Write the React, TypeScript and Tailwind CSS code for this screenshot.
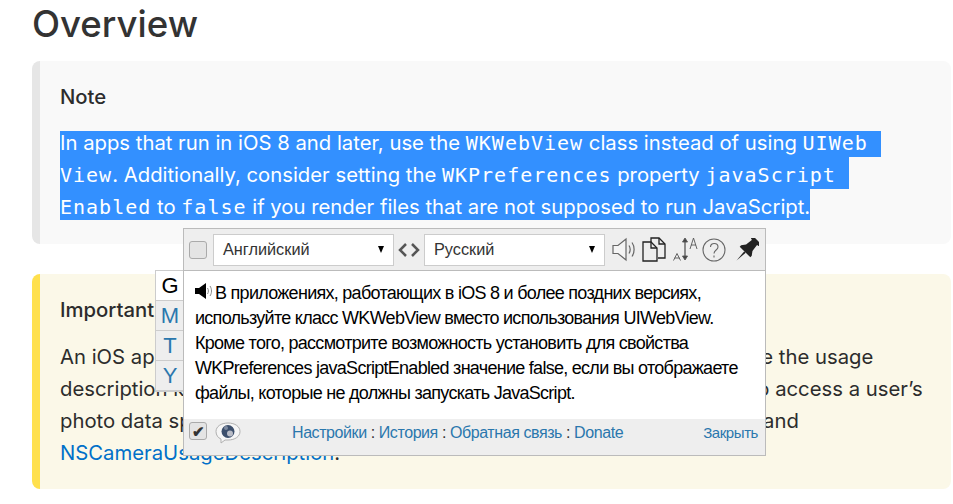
const mono = "font-['DejaVu_Sans_Mono',monospace] text-[20px] tracking-[1px]";

function Code({ children }: { children: React.ReactNode }) {
  return <span className={mono}>{children}</span>;
}

function SpeakerIcon() {
  return (
    <svg width="25" height="25" viewBox="0 0 25 25" fill="none" stroke="#666" strokeWidth="1.200">
      <path d="M1 8.500h5L14 2v21l-8-6.500H1z" fill="#f4f4f4" />
      <path d="M17 8.500c1.500 2.500 1.500 5.500 0 8M20 5.500c2.800 4 2.800 10 0 14" />
    </svg>
  );
}

function CopyIcon() {
  return (
    <svg width="25" height="25" viewBox="0 0 25 25" fill="none" stroke="#222" strokeWidth="1.300">
      <path d="M9 5V1h8l6 6v14h-7" />
      <path d="M17 1v6h6" />
      <path d="M1 5h8l6 6v13H1z" fill="#eee" />
      <path d="M9 5v6h6" />
    </svg>
  );
}

function FontSizeIcon() {
  return (
    <svg width="26" height="25" viewBox="0 0 26 25" fill="none" stroke="#555" strokeWidth="0.900">
      <path d="M0.500 23.500l3.500-7 3.500 7M1.500 21h5" />
      <path d="M12 4v16" strokeWidth="1.300" />
      <path d="M9.500 5L12 1l2.500 4zM9.500 19l2.500 4 2.500-4z" fill="#444" />
      <path d="M17 12l3.500-11 3.500 11M18 8h5" />
    </svg>
  );
}

function HelpIcon() {
  return (
    <svg width="24" height="24" viewBox="0 0 24 24" fill="none" stroke="#666" strokeWidth="1.100">
      <circle cx="12" cy="12" r="11" />
      <path d="M8.500 9c0-5 7.500-4.500 7.500 0 0 3-4 3-4 6.500" />
      <path d="M12 17.500v2" />
    </svg>
  );
}

function PinIcon() {
  return (
    <svg width="23" height="23" viewBox="0 0 23 23" fill="#222">
      <g transform="rotate(45 11.500 11.500)">
        <rect x="6" y="-2" width="11" height="3.500" rx="1" />
        <path d="M8 1h7l1 8 3 4v2H4v-2l3-4z" />
        <path d="M10.500 15h2L11.500 27z" />
      </g>
    </svg>
  );
}

function SmallSpeaker() {
  return (
    <svg width="18" height="18" viewBox="0 0 18 18" className="shrink-0 mb-[5px]" fill="none">
      <path d="M0 6h4l7-5v16l-7-5H0z" fill="#000" />
      <path d="M12.500 6c1.200 2 1.200 4 0 6M15 4c2 3 2 7 0 10" stroke="#888" strokeWidth="1" />
    </svg>
  );
}

function BubbleIcon() {
  return (
    <svg width="26" height="22" viewBox="0 0 26 22">
      <path d="M13 1c7 0 12 3.500 12 8.500S20 18 13 18c-1 0-2 0-3 0l-4 3 0-4C3 16 1 13 1 9.500 1 4.500 6 1 13 1z" fill="#f6f6f6" stroke="#b0b0b0" />
      <circle cx="13" cy="9.500" r="6.500" fill="#3c4f6c" />
      <circle cx="15" cy="11.500" r="3" fill="#b9bcc6" />
      <circle cx="11" cy="6" r="2" fill="#7d8aa0" />
    </svg>
  );
}

function LangSelect({ label }: { label: string }) {
  return (
    <div className="w-[181px] h-[32px] bg-white border border-[#ccc] flex items-center justify-between pl-[9px] pr-[9px] text-[16.300px] text-[#333]">
      <span>{label}</span>
      <span className="w-0 h-0 border-x-[3.500px] border-x-transparent border-t-[7px] border-t-black" />
    </div>
  );
}

function Tab({ letter, active }: { letter: string; active?: boolean }) {
  return (
    <div className={`h-[30px] pb-[1px] flex items-center justify-center text-[22px] border-b border-[#ccc] ${active ? "bg-white text-black" : "bg-[#eee] text-[#2a77ad]"}`}>
      {letter}
    </div>
  );
}

function Popup() {
  return (
    <>
      <div className="absolute left-[155px] top-[270px] w-[29px] border border-[#ccc] border-r-0 font-['Liberation_Sans',sans-serif]">
        <Tab letter="G" active />
        <Tab letter="M" />
        <Tab letter="T" />
        <Tab letter="Y" />
      </div>
      <div className="absolute left-[183px] top-[228px] w-[583px] h-[228px] flex flex-col border border-[#bbb] bg-white font-['Liberation_Sans',sans-serif]">
        <div className="h-[42px] shrink-0 bg-[#eee] border-b border-[#bbb] flex items-center pl-[5px]">
          <div className="w-[18px] h-[18px] rounded-[3px] bg-[#e4e4e4] border border-[#aaa] mr-[6px]" />
          <LangSelect label="Английский" />
          <div className="w-[30px] flex justify-center">
            <svg width="22" height="14" viewBox="0 0 22 14" fill="none" stroke="#555" strokeWidth="2.500">
              <path d="M8 1L2 7l6 6M14 1l6 6-6 6" />
            </svg>
          </div>
          <LangSelect label="Русский" />
          <div className="flex items-center ml-[7px]">
            <SpeakerIcon />
            <div className="ml-[5px]"><CopyIcon /></div>
            <div className="ml-[6px]"><FontSizeIcon /></div>
            <div className="ml-[3px]"><HelpIcon /></div>
            <div className="ml-[10px]"><PinIcon /></div>
          </div>
        </div>
        <div className="flex-1 px-[11px] pt-[10px] text-[18px] leading-[25px] text-black tracking-[-0.720px] whitespace-pre">
          <div className="flex items-center">
            <SmallSpeaker />
            <span className="ml-[2px]">В приложениях, работающих в iOS 8 и более поздних версиях,</span>
          </div>
          <div>используйте класс WKWebView вместо использования UIWebView.</div>
          <div>Кроме того, рассмотрите возможность установить для свойства</div>
          <div>WKPreferences javaScriptEnabled значение false, если вы отображаете</div>
          <div>файлы, которые не должны запускать JavaScript.</div>
        </div>
        <div className="h-[36px] shrink-0 bg-[#eee] flex items-center pl-[5px] pr-[7px] pb-[10px] pt-[2px] text-[16px] tracking-[-0.420px]">
          <div className="w-[18px] h-[18px] mb-[4px] rounded-[3px] bg-[#e4e4e4] border border-[#aaa] flex items-center justify-center text-[#333] text-[15px] font-bold leading-none mr-[8px]">✔</div>
          <div className="mb-[1px]"><BubbleIcon /></div>
          <div className="ml-[51px] text-[#2a77ad]">
            Настройки <span className="text-[#333]">:</span> История <span className="text-[#333]">:</span> Обратная связь <span className="text-[#333]">:</span> Donate
          </div>
          <div className="ml-auto text-[#2a77ad] text-[15px]">Закрыть</div>
        </div>
      </div>
    </>
  );
}

export default function App() {
  return (
    <div className="relative w-[953px] h-[504px] overflow-hidden bg-white pl-[32px] pr-[2px] font-['Inter',sans-serif] text-[#2c2c2c]">
      <h1 className="text-[36.600px] leading-[48px] font-medium text-[#333] h-[61px]">Overview</h1>

      <div className="h-[183px] rounded-[8px] bg-[#f9f9f9] border-l-[8px] border-[#e6e6e6] pl-[20px] pt-[20px] text-[20.300px]">
        <div className="leading-[32px] font-medium h-[50px]">Note</div>
        <div className="whitespace-pre text-white">
          <div className="w-fit h-[26px] leading-[24px] bg-[#3390ff]">In apps that run in iOS 8 and later, use the <Code>WKWebView</Code> class instead of using <Code>UIWeb </Code></div>
          <div className="w-fit h-[32px] leading-[36px] bg-[#3390ff]"><Code>View</Code>. Additionally, consider setting the <Code>WKPreferences</Code> property <Code>javaScript </Code></div>
          <div className="w-fit h-[31px] leading-[36px] bg-[#3390ff]"><Code>Enabled</Code> to <Code>false</Code> if you render files that are not supposed to run JavaScript.</div>
        </div>
      </div>

      <div className="mt-[30px] h-[215px] rounded-[8px] bg-[#fbf8e8] border-l-[8px] border-[#ffe04d] pl-[20px] pt-[20px] text-[20.300px] leading-[32px] whitespace-pre">
        <div className="font-medium h-[47px]">Important</div>
        <div>An iOS ap<span className="[word-spacing:4.500px]">p linked on or after iOS 10.0 must include in its Info.plist fil</span>e the usage</div>
        <div>description k<span className="[word-spacing:-0.300px]">eys for the types of data it needs to access or it will crash. T</span>o access a user’s</div>
        <div>photo data sp<span className="[word-spacing:-7.800px]">ecifically, it must include both NSPhotoLibraryUsageDescription </span>and</div>
        <div><span className="text-[#0070c9]">NSCameraUsageDescription</span>.</div>
      </div>

      <Popup />
    </div>
  );
}
